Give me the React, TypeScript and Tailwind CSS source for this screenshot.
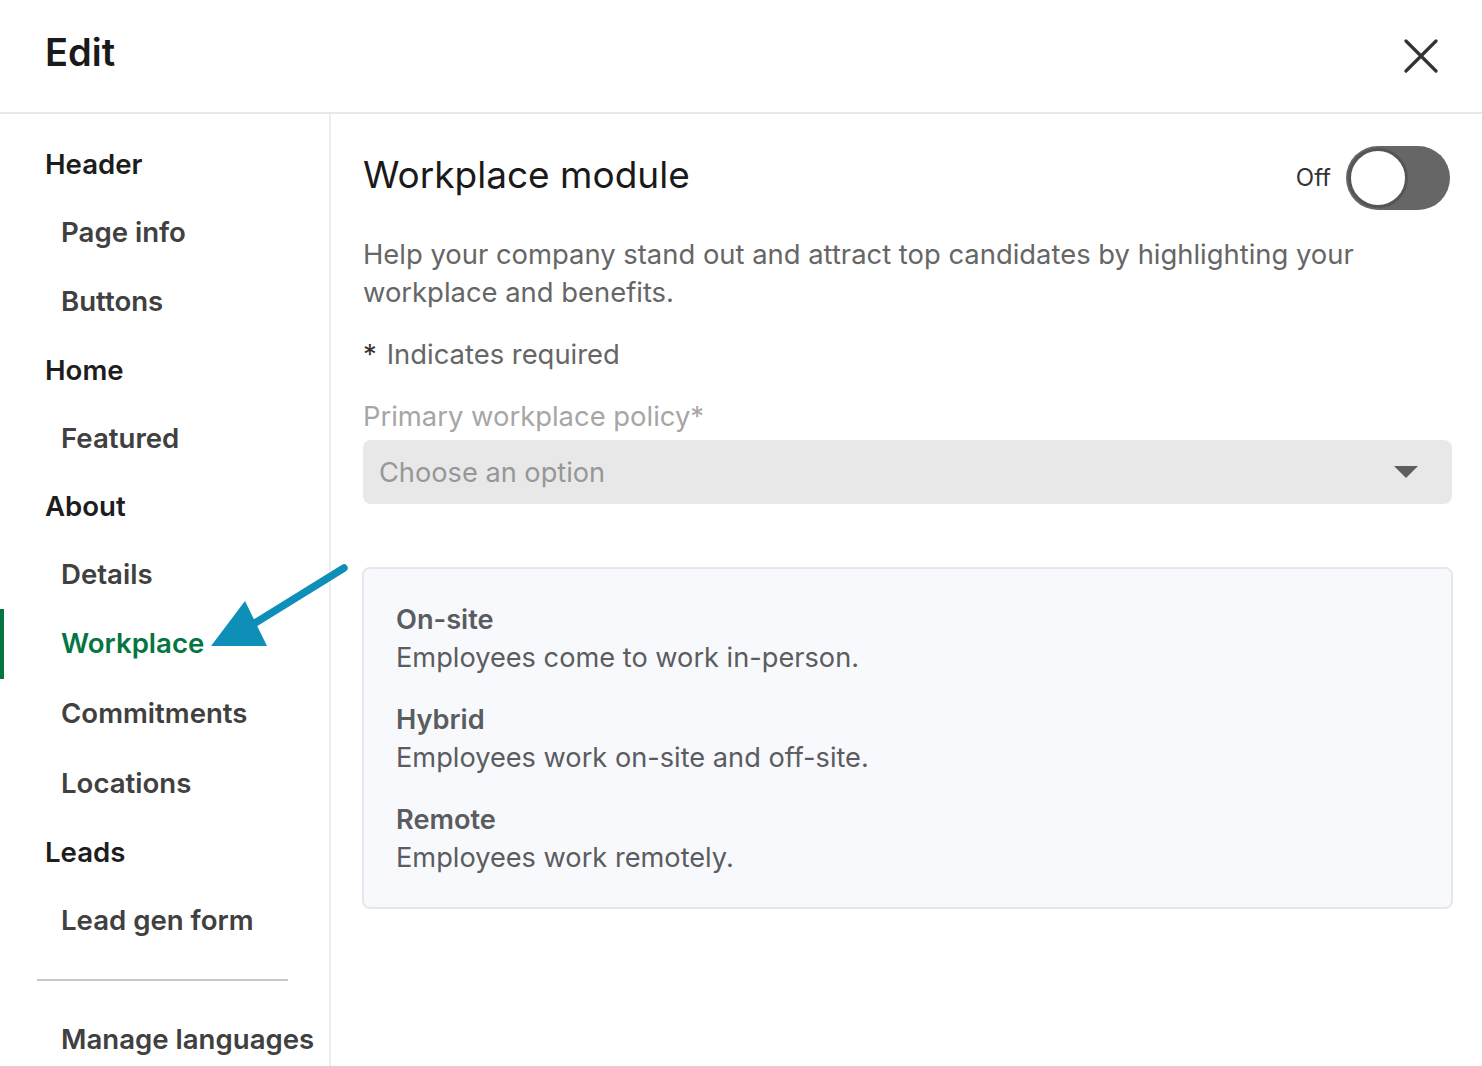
import React from 'react';

type NavItem = {
  label: string;
  level: 'top' | 'sub';
  h: string;
  active?: boolean;
};

const navItems: NavItem[] = [
  { label: 'Header', level: 'top', h: 'h-[68px]' },
  { label: 'Page info', level: 'sub', h: 'h-[68px]' },
  { label: 'Buttons', level: 'sub', h: 'h-[70px]' },
  { label: 'Home', level: 'top', h: 'h-[68px]' },
  { label: 'Featured', level: 'sub', h: 'h-[68px]' },
  { label: 'About', level: 'top', h: 'h-[68px]' },
  { label: 'Details', level: 'sub', h: 'h-[68px]' },
  { label: 'Workplace', level: 'sub', h: 'h-[70px]', active: true },
  { label: 'Commitments', level: 'sub', h: 'h-[70px]' },
  { label: 'Locations', level: 'sub', h: 'h-[70px]' },
  { label: 'Leads', level: 'top', h: 'h-[68px]' },
  { label: 'Lead gen form', level: 'sub', h: 'h-[68px]' },
];

const policies = [
  { title: 'On-site', desc: 'Employees come to work in-person.' },
  { title: 'Hybrid', desc: 'Employees work on-site and off-site.' },
  { title: 'Remote', desc: 'Employees work remotely.' },
];

function SideNav() {
  return (
    <nav className="w-[331px] shrink-0 border-r-2 border-[#ececec] pt-[17px]">
      {navItems.map(item => {
        let cls = 'flex items-center text-[27.6px] font-semibold ';
        if (item.active) {
          cls += 'border-l-4 border-[#057642] pl-[57px] text-[#057642]';
        } else if (item.level === 'top') {
          cls += 'pl-[45px] text-[#1d1d1d]';
        } else {
          cls += 'pl-[61px] text-[#404040]';
        }
        return (
          <div key={item.label} className={`${cls} ${item.h}`}>
            {item.label}
          </div>
        );
      })}
      <div className="mx-[37px] mt-[24px] w-[251px] border-t-2 border-[#c8c8c8]" />
      <div className="mt-[25px] flex h-[68px] items-center pl-[61px] text-[27.6px] font-semibold text-[#404040]">
        Manage languages
      </div>
    </nav>
  );
}

function Toggle() {
  return (
    <div className="mr-[2px] flex items-center gap-[15px]">
      <span className="text-[24px] text-[#333]">Off</span>
      <div className="flex h-[64px] w-[104px] items-center rounded-full bg-[#666]">
        <div className="ml-[2px] h-[60px] w-[60px] rounded-full border-[3px] border-[#555] bg-white" />
      </div>
    </div>
  );
}

export default function App() {
  return (
    <div className="relative h-[1066px] w-full overflow-hidden bg-white font-['Inter','Noto_Sans',sans-serif]">
      {/* Top bar */}
      <header className="flex h-[114px] items-center justify-between border-b-2 border-[#e8e8e8] pl-[45px] pr-[44px] pb-[8px]">
        <h1 className="text-[38px] font-semibold text-[#1a1a1a]">Edit</h1>
        <svg width="34" height="34" viewBox="0 0 34 34" className="mt-[8px]">
          <path d="M2 2 L32 32 M32 2 L2 32" stroke="#333" strokeWidth="3.2" strokeLinecap="round" />
        </svg>
      </header>

      <div className="flex">
        <SideNav />

        <main className="flex-1 pl-[32px] pr-[30px] pt-[32px]">
          <div className="flex h-[64px] items-center justify-between">
            <h2 className="mb-[6px] text-[37px] font-normal text-[#1a1a1a]">Workplace module</h2>
            <Toggle />
          </div>

          <p className="mt-[25px] text-[27.4px] leading-[38px] text-[#666]">
            Help your company stand out and attract top candidates by highlighting your
            <br />
            workplace and benefits.
          </p>

          <p className="mt-[24px] text-[27.4px] leading-[38px] text-[#666]">
            <span className="mr-[10px] text-[#333]">*</span>Indicates required
          </p>

          <label className="mt-[24px] block text-[27.4px] leading-[38px] text-[#a6a6a6]">
            Primary workplace policy*
          </label>
          <div className="mt-[5px] flex h-[64px] items-center justify-between rounded-[8px] bg-[#e8e8e8] pl-[16px] pr-[34px]">
            <span className="mt-[2px] text-[27.2px] text-[#979797]">Choose an option</span>
            <svg width="24" height="12" viewBox="0 0 24 12">
              <path d="M0 0 L24 0 L12 12 Z" fill="#5e5e5e" />
            </svg>
          </div>

          <div className="mt-[63px] ml-[-1px] mr-[-1px] rounded-[8px] border-2 border-[#e6e7ea] bg-[#f8f9fc] pl-[32px] pt-[32px] pb-[30px]">
            <div className="flex flex-col gap-[24px]">
              {policies.map(p => (
                <div key={p.title} className="text-[27.2px] leading-[38px] text-[#5b5c60]">
                  <div className="font-semibold">{p.title}</div>
                  <div>{p.desc}</div>
                </div>
              ))}
            </div>
          </div>
        </main>
      </div>

      {/* Annotation arrow */}
      <svg
        className="pointer-events-none absolute left-[200px] top-[555px]"
        width="155"
        height="100"
        viewBox="0 0 155 100"
      >
        <path d="M144 13 L55 68" stroke="#0e8fb8" strokeWidth="7.5" strokeLinecap="round" />
        <path d="M11 91 L45 46 L67 91 Z" fill="#0e8fb8" />
      </svg>
    </div>
  );
}
